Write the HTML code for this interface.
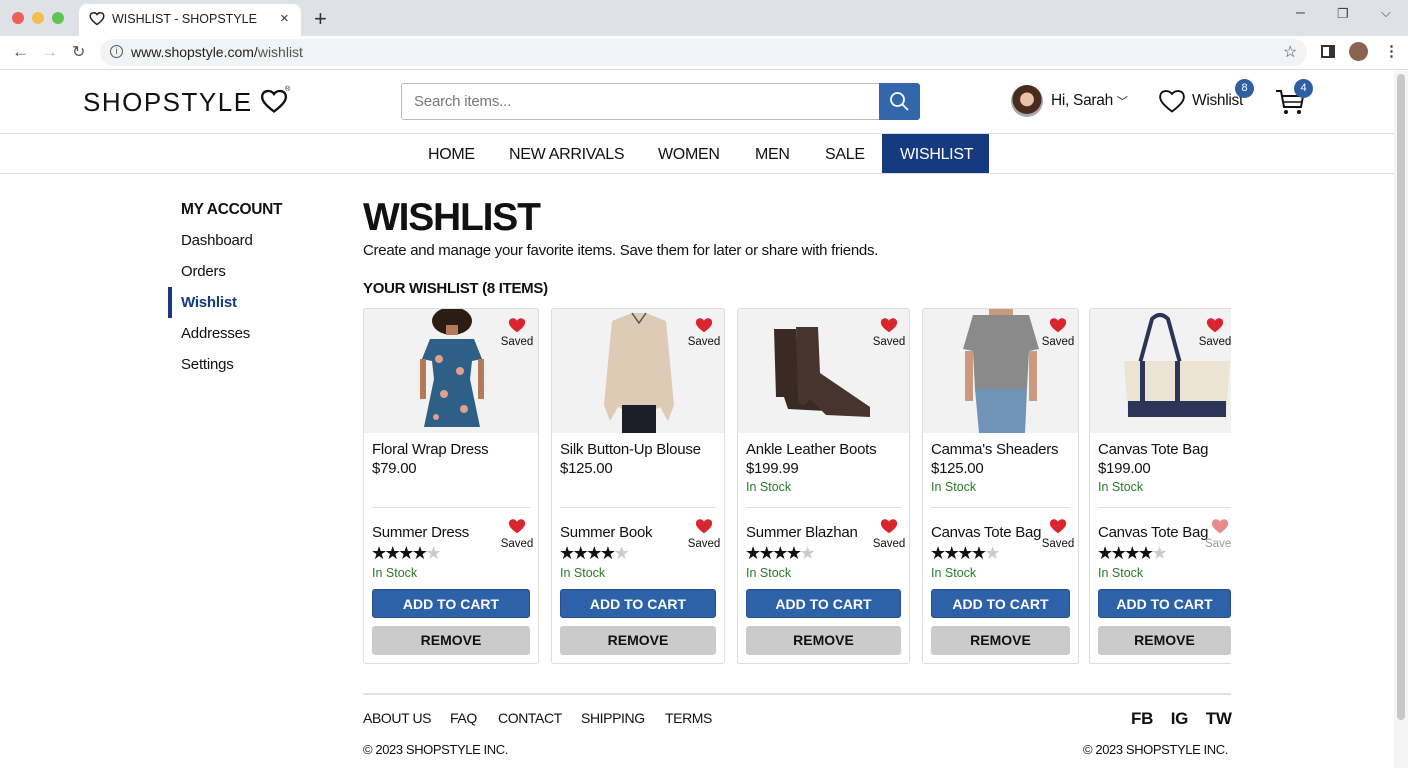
<!DOCTYPE html>
<html><head><meta charset="utf-8"><style>
*{margin:0;padding:0;box-sizing:border-box}
body{width:1408px;height:768px;overflow:hidden;background:#fff;font-family:"Liberation Sans",Arial,sans-serif;color:#111;position:relative}
.a{position:absolute;white-space:nowrap}
.card{position:absolute;top:308px;height:356px;border:1px solid #ddd;border-radius:3px;background:#fff;overflow:hidden}
.img{position:absolute;left:0;top:0;right:0;height:124px;background:#f2f2f2}
.t{position:absolute;left:8px;font-size:15px;white-space:nowrap;color:#111;letter-spacing:-0.25px}
.g{position:absolute;left:8px;font-size:12.5px;color:#2a7a2a;white-space:nowrap}
.hr{position:absolute;left:8px;right:8px;top:198px;height:1px;background:#ddd}
.btn{position:absolute;left:8px;right:8px;height:29px;border-radius:3px;font-size:14px;font-weight:bold;text-align:center;line-height:29px}
.add{top:280px;background:#2e62a8;color:#fff;border:1px solid #24508f}
.rem{top:317px;background:#cbcbcb;color:#111}
.sv{position:absolute;font-size:11.5px;text-align:center;width:40px}
.stars{position:absolute;left:7px;top:234px;font-size:18px;letter-spacing:-2.5px;color:#111}
.stars i{font-style:normal;color:#ccc}
.nav a{position:absolute;top:146px;font-size:16px;color:#111;letter-spacing:-0.3px}
</style></head><body>
<div class="a" style="left:0;top:0;width:1408px;height:36px;background:#dee1e6"></div>
<div class="a" style="left:12px;top:12px;width:12px;height:12px;border-radius:50%;background:#ee5f57"></div>
<div class="a" style="left:32px;top:12px;width:12px;height:12px;border-radius:50%;background:#f4bd4f"></div>
<div class="a" style="left:52px;top:12px;width:12px;height:12px;border-radius:50%;background:#5fc454"></div>
<div class="a" style="left:79px;top:4px;width:222px;height:32px;background:#fff;border-radius:8px 8px 0 0"></div>
<svg class="a" style="left:89px;top:11px" width="16" height="15" viewBox="0 0 24 22"><path d="M12 20 C4 14 1 10 2 6 C3 2 9 1 12 5 C15 1 21 2 22 6 C23 10 20 14 12 20Z" fill="none" stroke="#222" stroke-width="2.2"/></svg>
<div class="a" style="left:112px;top:12px;font-size:12.5px;color:#222">WISHLIST - SHOPSTYLE</div>
<div class="a" style="left:280px;top:10px;font-size:15px;color:#333">×</div>
<div class="a" style="left:314px;top:6px;font-size:22px;color:#333">+</div>
<div class="a" style="left:1296px;top:4px;font-size:16px;color:#444">–</div>
<div class="a" style="left:1337px;top:6px;font-size:13px;color:#444">❐</div>
<div class="a" style="left:1381px;top:5px;font-size:13px;color:#444">⌵</div>
<div class="a" style="left:0;top:36px;width:1408px;height:34px;background:#fff;border-bottom:1px solid #ddd"></div>
<div class="a" style="left:12px;top:42px;font-size:17px;color:#555">←</div>
<div class="a" style="left:41px;top:42px;font-size:17px;color:#bbb">→</div>
<div class="a" style="left:72px;top:42px;font-size:16px;color:#555">↻</div>
<div class="a" style="left:100px;top:39px;width:1207px;height:27px;border-radius:14px;background:#f1f3f4"></div>
<div class="a" style="left:110px;top:45px;width:13px;height:13px;border:1.5px solid #555;border-radius:50%;font-size:9px;text-align:center;line-height:10px;color:#555">i</div>
<div class="a" style="left:131px;top:44px;font-size:14px;color:#222">www.shopstyle.com/<span style="color:#555">wishlist</span></div>
<div class="a" style="left:1283px;top:42px;font-size:16px;color:#444">☆</div>
<div class="a" style="left:1321px;top:45px;width:14px;height:13px;border:2px solid #333;border-right-width:6px"></div>
<div class="a" style="left:1349px;top:42px;width:19px;height:19px;border-radius:50%;background:#8a6450"></div>
<div class="a" style="left:1384px;top:42px;font-size:15px;color:#444;font-weight:bold">⋮</div>
<div class="a" style="left:1394px;top:71px;width:14px;height:697px;background:#f5f5f5"></div>
<div class="a" style="left:1397px;top:74px;width:8px;height:646px;border-radius:4px;background:#c8c8c8"></div>
<div class="a" style="left:83px;top:87px;font-size:26px;letter-spacing:1.5px;color:#111">SHOPSTYLE</div>
<svg class="a" style="left:260px;top:88px" width="28" height="26" viewBox="0 0 24 22"><path d="M12 20 C4 14 1 10 2 6 C3 2 9 1 12 5 C15 1 21 2 22 6 C23 10 20 14 12 20Z" fill="none" stroke="#111" stroke-width="2"/></svg>
<div class="a" style="left:285px;top:86px;font-size:7px">®</div>
<div class="a" style="left:401px;top:83px;width:479px;height:37px;border:1px solid #bbb;border-radius:3px 0 0 3px"></div>
<div class="a" style="left:414px;top:93px;font-size:15px;color:#777;letter-spacing:-0.2px">Search items...</div>
<div class="a" style="left:879px;top:83px;width:41px;height:37px;background:#3366aa;border-radius:0 3px 3px 0"></div>
<svg class="a" style="left:889px;top:91px" width="21" height="21" viewBox="0 0 21 21"><circle cx="8.5" cy="8.5" r="6.5" fill="none" stroke="#fff" stroke-width="1.8"/><path d="M13.5 13.5 L19 19" stroke="#fff" stroke-width="1.8"/></svg>
<div class="a" style="left:1011px;top:85px;width:32px;height:32px;border-radius:50%;background:radial-gradient(circle at 50% 45%,#e8c3a8 0 28%,#4a2c1f 30% 60%,#aaa 62%)"></div>
<div class="a" style="left:1051px;top:92px;font-size:15.5px;letter-spacing:-0.3px">Hi, Sarah <span style="font-size:11px">﹀</span></div>
<svg class="a" style="left:1158px;top:88px" width="28" height="26" viewBox="0 0 24 22"><path d="M12 20 C4 14 1 10 2 6 C3 2 9 1 12 5 C15 1 21 2 22 6 C23 10 20 14 12 20Z" fill="none" stroke="#111" stroke-width="1.6"/></svg>
<div class="a" style="left:1192px;top:92px;font-size:15.5px;letter-spacing:-0.3px">Wishlist</div>
<div class="a" style="left:1235px;top:79px;width:19px;height:19px;border-radius:50%;background:#2e5fa3;color:#fff;font-size:11px;text-align:center;line-height:19px">8</div>
<svg class="a" style="left:1274px;top:87px" width="32" height="30" viewBox="0 0 32 30"><path d="M2 4 H7 L10 20 H27 L29 9 H8" fill="none" stroke="#111" stroke-width="2"/><path d="M10 15 H28" stroke="#111" stroke-width="1.6"/><circle cx="12" cy="25" r="2" fill="#111"/><circle cx="25" cy="25" r="2" fill="#111"/></svg>
<div class="a" style="left:1294px;top:79px;width:19px;height:19px;border-radius:50%;background:#2e5fa3;color:#fff;font-size:11px;text-align:center;line-height:19px">4</div>
<div class="a" style="left:0;top:133px;width:1394px;height:1px;background:#ddd"></div>
<div class="a" style="left:0;top:173px;width:1394px;height:1px;background:#ddd"></div>
<div class="a" style="left:882px;top:134px;width:107px;height:39px;background:#163a80"></div>
<div class="nav">
<a class="a" style="left:428px">HOME</a>
<a class="a" style="left:509px">NEW ARRIVALS</a>
<a class="a" style="left:658px">WOMEN</a>
<a class="a" style="left:755px">MEN</a>
<a class="a" style="left:825px">SALE</a>
<a class="a" style="left:900px;color:#fff">WISHLIST</a>
</div>
<div class="a" style="left:181px;top:201px;font-size:15.5px;font-weight:bold;letter-spacing:-0.3px">MY ACCOUNT</div>
<div class="a" style="left:181px;top:232px;font-size:15px;letter-spacing:-0.2px">Dashboard</div>
<div class="a" style="left:181px;top:263px;font-size:15px;letter-spacing:-0.2px">Orders</div>
<div class="a" style="left:168px;top:287px;width:4px;height:31px;background:#163a80"></div>
<div class="a" style="left:181px;top:294px;font-size:15px;font-weight:bold;color:#163a80;letter-spacing:-0.2px">Wishlist</div>
<div class="a" style="left:181px;top:325px;font-size:15px;letter-spacing:-0.2px">Addresses</div>
<div class="a" style="left:181px;top:356px;font-size:15px;letter-spacing:-0.2px">Settings</div>
<div class="a" style="left:363px;top:196px;font-size:39px;font-weight:bold;letter-spacing:-1.2px">WISHLIST</div>
<div class="a" style="left:363px;top:242px;font-size:15px;letter-spacing:-0.28px">Create and manage your favorite items. Save them for later or share with friends.</div>
<div class="a" style="left:363px;top:280px;font-size:15px;font-weight:bold;letter-spacing:-0.3px">YOUR WISHLIST (8 ITEMS)</div>

<div class="a" style="left:360px;top:300px;width:871px;height:370px;overflow:hidden">
<div class="card" style="left:3px;top:8px;width:176px">
 <div class="img"><svg width="176" height="124"><ellipse cx="88" cy="12" rx="20" ry="14" fill="#2a1d14"/><rect x="82" y="16" width="12" height="10" fill="#b47a58"/><path d="M66 30 L110 30 L118 50 L108 52 L106 70 L116 118 L60 118 L70 70 L68 52 L58 50Z" fill="#2e5f86"/><circle cx="75" cy="50" r="4" fill="#e0a08c"/><circle cx="96" cy="62" r="4" fill="#e0a08c"/><circle cx="80" cy="85" r="4" fill="#e0a08c"/><circle cx="100" cy="100" r="4" fill="#e0a08c"/><circle cx="72" cy="108" r="3" fill="#e0a08c"/><rect x="56" y="50" width="6" height="40" fill="#b47a58"/><rect x="114" y="50" width="6" height="40" fill="#b47a58"/></svg></div>
 <div class="t" style="top:132px">Floral Wrap Dress</div><div class="t" style="top:151px">$79.00</div>
 <div class="hr"></div>
 <div class="t" style="top:215px">Summer Dress</div>
 <div class="stars">★★★★<i>★</i></div><div class="g" style="top:257px">In Stock</div>
 <div class="btn add">ADD TO CART</div><div class="btn rem">REMOVE</div>
</div>
<div class="card" style="left:191px;top:8px;width:174px">
 <div class="img"><svg width="174" height="124"><path d="M60 12 L80 4 L94 4 L114 12 L122 96 L116 112 L108 98 L104 100 L70 100 L66 98 L58 112 L52 96Z" fill="#ddcbb5"/><rect x="70" y="96" width="34" height="28" fill="#1e1e28"/><path d="M80 4 L87 14 L94 4" fill="none" stroke="#555" stroke-width="1.5"/></svg></div>
 <div class="t" style="top:132px">Silk Button-Up Blouse</div><div class="t" style="top:151px">$125.00</div>
 <div class="hr"></div>
 <div class="t" style="top:215px">Summer Book</div>
 <div class="stars">★★★★<i>★</i></div><div class="g" style="top:257px">In Stock</div>
 <div class="btn add">ADD TO CART</div><div class="btn rem">REMOVE</div>
</div>
<div class="card" style="left:377px;top:8px;width:173px">
 <div class="img"><svg width="173" height="124"><path d="M36 20 L58 20 L60 70 L86 92 L88 102 L50 100 L46 88 L38 88 Z" fill="#3a2a24"/><path d="M58 18 L80 18 L82 64 L132 98 L132 108 L88 106 L72 90 L66 96 L60 94 Z" fill="#47342c"/></svg></div>
 <div class="t" style="top:132px">Ankle Leather Boots</div><div class="t" style="top:151px">$199.99</div><div class="g" style="top:171px">In Stock</div>
 <div class="hr"></div>
 <div class="t" style="top:215px">Summer Blazhan</div>
 <div class="stars">★★★★<i>★</i></div><div class="g" style="top:257px">In Stock</div>
 <div class="btn add">ADD TO CART</div><div class="btn rem">REMOVE</div>
</div>
<div class="card" style="left:562px;top:8px;width:157px">
 <div class="img"><svg width="157" height="124"><rect x="66" y="0" width="24" height="10" fill="#c89a7e"/><path d="M50 6 L106 6 L116 40 L106 42 L104 80 L52 80 L50 42 L40 40Z" fill="#8a8a8a"/><path d="M52 80 L104 80 L102 124 L56 124Z" fill="#7093b8"/><rect x="42" y="42" width="8" height="50" fill="#c89a7e"/><rect x="106" y="42" width="8" height="50" fill="#c89a7e"/></svg></div>
 <div class="t" style="top:132px">Camma's Sheaders</div><div class="t" style="top:151px">$125.00</div><div class="g" style="top:171px">In Stock</div>
 <div class="hr"></div>
 <div class="t" style="top:215px">Canvas Tote Bag</div>
 <div class="stars">★★★★<i>★</i></div><div class="g" style="top:257px">In Stock</div>
 <div class="btn add">ADD TO CART</div><div class="btn rem">REMOVE</div>
</div>
<div class="card" style="left:729px;top:8px;width:160px;border-right:none">
 <div class="img"><svg width="160" height="124"><path d="M50 54 L62 10 Q70 2 78 10 L90 54" fill="none" stroke="#2a3558" stroke-width="4"/><path d="M34 52 L140 52 L136 108 L38 108Z" fill="#ece4d2"/><rect x="38" y="92" width="98" height="16" fill="#2a3558"/><rect x="50" y="52" width="5" height="42" fill="#2a3558"/><rect x="85" y="52" width="5" height="42" fill="#2a3558"/></svg></div>
 <div class="t" style="top:132px">Canvas Tote Bag</div><div class="t" style="top:151px">$199.00</div><div class="g" style="top:171px">In Stock</div>
 <div class="hr" style="right:0"></div>
 <div class="t" style="top:215px">Canvas Tote Bag</div>
 <div class="stars">★★★★<i>★</i></div><div class="g" style="top:257px">In Stock</div>
 <div class="btn add" style="right:18px">ADD TO CART</div><div class="btn rem" style="right:18px">REMOVE</div>
</div>
<svg class="a" style="left:148px;top:17px" width="18" height="16" viewBox="0 0 24 22"><path d="M12 21 C4 15 0 11 1 6 C2 1 9 0 12 5 C15 0 22 1 23 6 C24 11 20 15 12 21Z" fill="#d9262e"/></svg><div class="sv" style="left:137px;top:36px">Saved</div>
<svg class="a" style="left:148px;top:218px" width="18" height="16" viewBox="0 0 24 22"><path d="M12 21 C4 15 0 11 1 6 C2 1 9 0 12 5 C15 0 22 1 23 6 C24 11 20 15 12 21Z" fill="#d9262e"/></svg><div class="sv" style="left:137px;top:238px">Saved</div>
<svg class="a" style="left:335px;top:17px" width="18" height="16" viewBox="0 0 24 22"><path d="M12 21 C4 15 0 11 1 6 C2 1 9 0 12 5 C15 0 22 1 23 6 C24 11 20 15 12 21Z" fill="#d9262e"/></svg><div class="sv" style="left:324px;top:36px">Saved</div>
<svg class="a" style="left:335px;top:218px" width="18" height="16" viewBox="0 0 24 22"><path d="M12 21 C4 15 0 11 1 6 C2 1 9 0 12 5 C15 0 22 1 23 6 C24 11 20 15 12 21Z" fill="#d9262e"/></svg><div class="sv" style="left:324px;top:238px">Saved</div>
<svg class="a" style="left:520px;top:17px" width="18" height="16" viewBox="0 0 24 22"><path d="M12 21 C4 15 0 11 1 6 C2 1 9 0 12 5 C15 0 22 1 23 6 C24 11 20 15 12 21Z" fill="#d9262e"/></svg><div class="sv" style="left:509px;top:36px">Saved</div>
<svg class="a" style="left:520px;top:218px" width="18" height="16" viewBox="0 0 24 22"><path d="M12 21 C4 15 0 11 1 6 C2 1 9 0 12 5 C15 0 22 1 23 6 C24 11 20 15 12 21Z" fill="#d9262e"/></svg><div class="sv" style="left:509px;top:238px">Saved</div>
<svg class="a" style="left:689px;top:17px" width="18" height="16" viewBox="0 0 24 22"><path d="M12 21 C4 15 0 11 1 6 C2 1 9 0 12 5 C15 0 22 1 23 6 C24 11 20 15 12 21Z" fill="#d9262e"/></svg><div class="sv" style="left:678px;top:36px">Saved</div>
<svg class="a" style="left:689px;top:218px" width="18" height="16" viewBox="0 0 24 22"><path d="M12 21 C4 15 0 11 1 6 C2 1 9 0 12 5 C15 0 22 1 23 6 C24 11 20 15 12 21Z" fill="#d9262e"/></svg><div class="sv" style="left:678px;top:238px">Saved</div>
<svg class="a" style="left:846px;top:17px" width="18" height="16" viewBox="0 0 24 22"><path d="M12 21 C4 15 0 11 1 6 C2 1 9 0 12 5 C15 0 22 1 23 6 C24 11 20 15 12 21Z" fill="#d9262e"/></svg><div class="sv" style="left:835px;top:36px">Saved</div>
<svg class="a" style="left:851px;top:218px" width="18" height="16" viewBox="0 0 24 22"><path d="M12 21 C4 15 0 11 1 6 C2 1 9 0 12 5 C15 0 22 1 23 6 C24 11 20 15 12 21Z" fill="#e88a8a"/></svg><div class="sv" style="left:845px;top:238px;color:#999;text-align:left">Save</div>
</div>
<div class="a" style="left:363px;top:693px;width:868px;height:2px;background:#e2e2e2"></div>
<div class="a" style="left:363px;top:710px;font-size:14px;letter-spacing:-0.4px">ABOUT US</div>
<div class="a" style="left:450px;top:710px;font-size:14px;letter-spacing:-0.4px">FAQ</div>
<div class="a" style="left:498px;top:710px;font-size:14px;letter-spacing:-0.4px">CONTACT</div>
<div class="a" style="left:581px;top:710px;font-size:14px;letter-spacing:-0.4px">SHIPPING</div>
<div class="a" style="left:665px;top:710px;font-size:14px;letter-spacing:-0.4px">TERMS</div>
<div class="a" style="left:1131px;top:709px;font-size:17px;font-weight:bold;letter-spacing:-0.3px">FB&nbsp;&nbsp;&nbsp;&nbsp;IG&nbsp;&nbsp;&nbsp;&nbsp;TW</div>
<div class="a" style="left:363px;top:742px;font-size:13px;letter-spacing:-0.4px">© 2023 SHOPSTYLE INC.</div>
<div class="a" style="left:1083px;top:742px;font-size:13px;letter-spacing:-0.4px">© 2023 SHOPSTYLE INC.</div>
</body></html>
